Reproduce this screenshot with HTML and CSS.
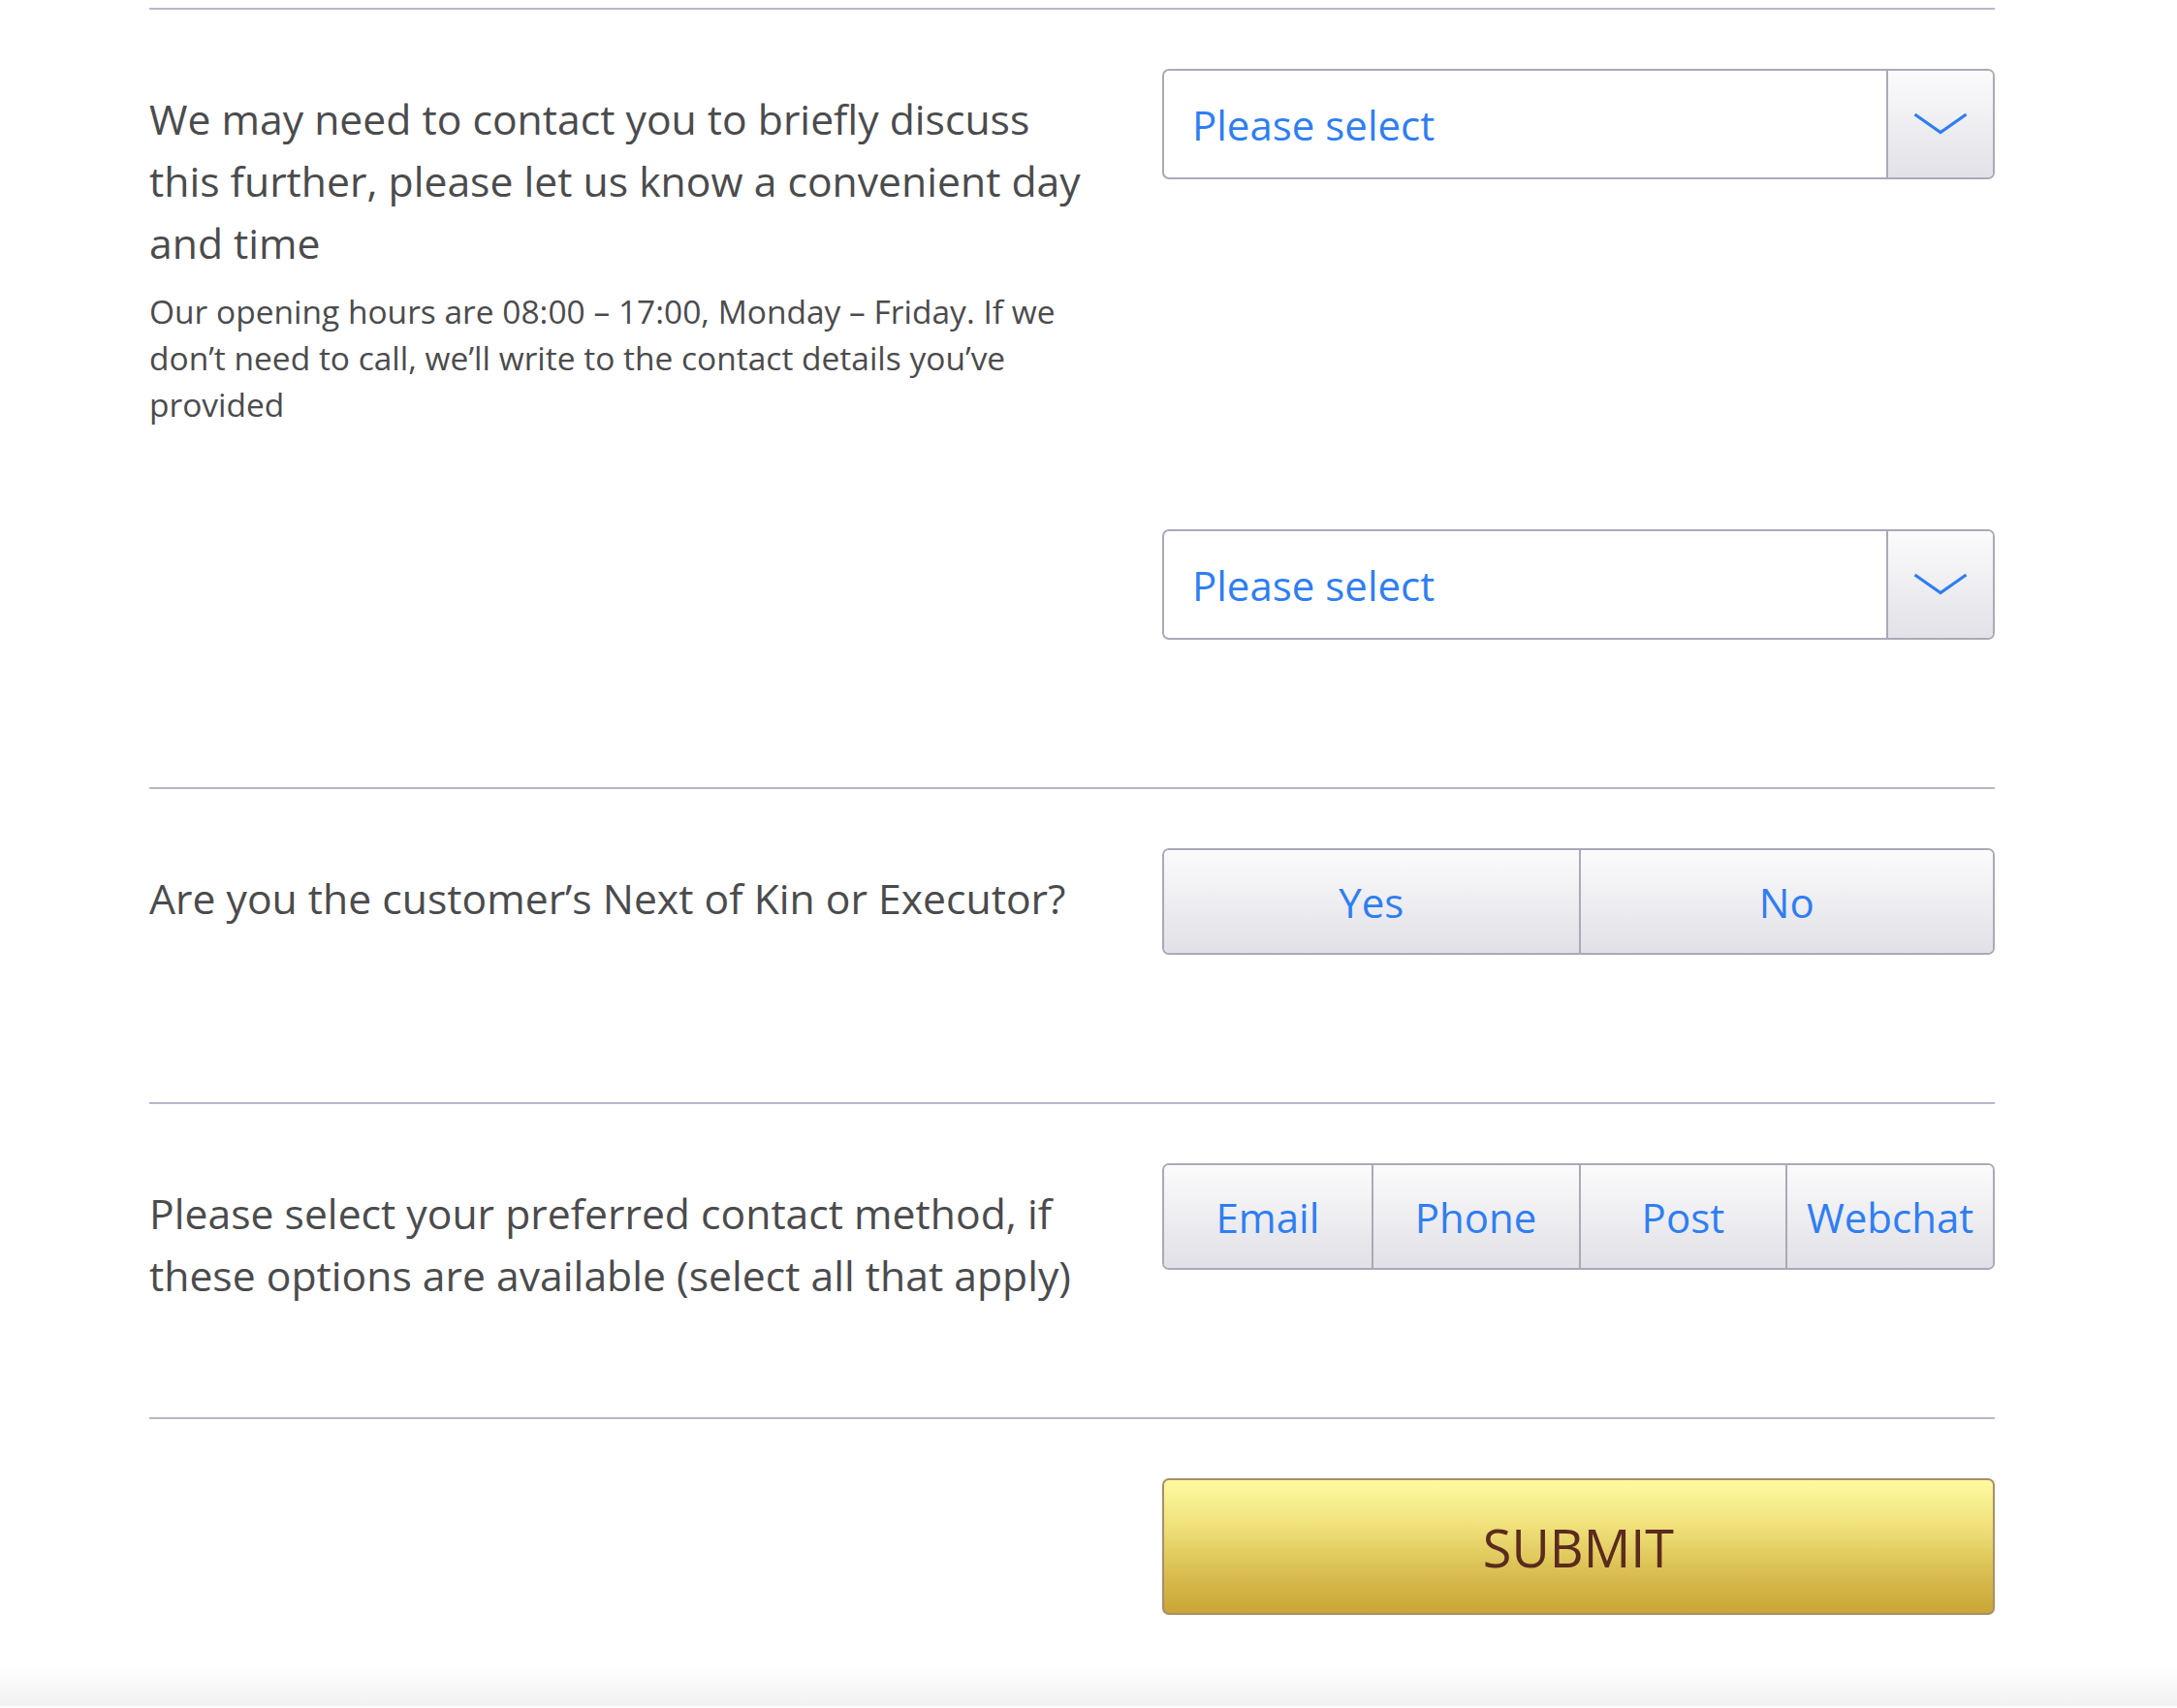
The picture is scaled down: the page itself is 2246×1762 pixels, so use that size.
FILE: index.html
```html
<!DOCTYPE html>
<html lang="en">
<head>
<meta charset="utf-8">
<title>Contact preferences</title>
<link rel="stylesheet" href="styles.css">
</head>
<body>
<main class="form">
  <section class="field">
    <div class="field-label">
      <p class="question">We may need to contact you to briefly discuss this further, please let us know a convenient day and time</p>
      <p class="hint">Our opening hours are 08:00 – 17:00, Monday – Friday. If we don’t need to call, we’ll write to the contact details you’ve provided</p>
    </div>
    <div class="field-control stack">
      <div class="select">
        <span class="select-value">Please select</span>
        <span class="select-arrow">
          <svg width="56" height="24" viewBox="0 0 56 24" aria-hidden="true"><polyline points="1.5,2 28,20.5 54.5,2" fill="none" stroke="#2f7ef2" stroke-width="3.2"/></svg>
        </span>
      </div>
      <div class="select">
        <span class="select-value">Please select</span>
        <span class="select-arrow">
          <svg width="56" height="24" viewBox="0 0 56 24" aria-hidden="true"><polyline points="1.5,2 28,20.5 54.5,2" fill="none" stroke="#2f7ef2" stroke-width="3.2"/></svg>
        </span>
      </div>
    </div>
  </section>

  <section class="field">
    <div class="field-label">
      <p class="question">Are you the customer’s Next of Kin or Executor?</p>
    </div>
    <div class="field-control">
      <div class="segmented two">
        <button class="seg">Yes</button>
        <button class="seg">No</button>
      </div>
    </div>
  </section>

  <section class="field">
    <div class="field-label">
      <p class="question">Please select your preferred contact method, if these options are available (select all that apply)</p>
    </div>
    <div class="field-control">
      <div class="segmented four">
        <button class="seg">Email</button>
        <button class="seg">Phone</button>
        <button class="seg">Post</button>
        <button class="seg">Webchat</button>
      </div>
    </div>
  </section>

  <section class="field last">
    <div class="field-label"></div>
    <div class="field-control">
      <button class="submit">SUBMIT</button>
    </div>
  </section>
</main>
<div class="page-foot"></div>
</body>
</html>
```

FILE: styles.css
```css
* {
  box-sizing: border-box;
}

html, body {
  margin: 0;
  padding: 0;
  background: #ffffff;
}

body {
  font-family: "Open Sans", "Noto Sans", "Liberation Sans", sans-serif;
  color: #4b4b4d;
  padding-top: 8px;
}

.form {
  width: 1904px;
  margin-left: 154px;
}

.field {
  display: grid;
  grid-template-columns: 970px 859px;
  column-gap: 75px;
  border-top: 2px solid #b9b6ca;
  padding-top: 61px;
}

.field-control {
  padding-bottom: 152px;
}

.field.last .field-control {
  padding-bottom: 52px;
}

.stack {
  display: flex;
  flex-direction: column;
  gap: 361px;
}

.question {
  margin: 20px 0 0 0;
  font-size: 42.7px;
  line-height: 64px;
}

.hint {
  margin: 14px 0 0 0;
  font-size: 33.5px;
  line-height: 48px;
}

.select {
  display: flex;
  height: 114px;
  border: 2px solid #aba9b8;
  border-radius: 7px;
  background: #ffffff;
  overflow: hidden;
}

.select-value {
  flex: 1;
  display: flex;
  align-items: center;
  padding-left: 29px;
  font-size: 42px;
  color: #2f7ef2;
}

.select-arrow {
  width: 110px;
  display: flex;
  align-items: center;
  justify-content: center;
  border-left: 2px solid #aba9b8;
  background: linear-gradient(#fbfbfc, #e2e1e7);
}

.segmented {
  display: grid;
  height: 110px;
  border: 2px solid #aba9b8;
  border-radius: 7px;
  overflow: hidden;
}

.segmented.two {
  grid-template-columns: 1fr 1fr;
}

.segmented.four {
  grid-template-columns: 1fr 1fr 1fr 1fr;
}

.seg {
  margin: 0;
  padding: 0;
  border: 0;
  border-left: 2px solid #aba9b8;
  background: linear-gradient(#fbfbfc, #e1e0e6);
  font-family: inherit;
  font-size: 42px;
  color: #2f7ef2;
}

.seg:first-child {
  border-left: 0;
}

.submit {
  display: block;
  width: 100%;
  height: 141px;
  margin: 0;
  padding: 0;
  border: 2px solid #a88f68;
  border-radius: 7px;
  background: linear-gradient(#fffaa2, #efe07a 35%, #dcc255 65%, #c9a535);
  font-family: inherit;
  font-size: 54px;
  color: #5a2b1e;
}

.page-foot {
  height: 42px;
  background: linear-gradient(#ffffff, #f1f1f1);
}
```
